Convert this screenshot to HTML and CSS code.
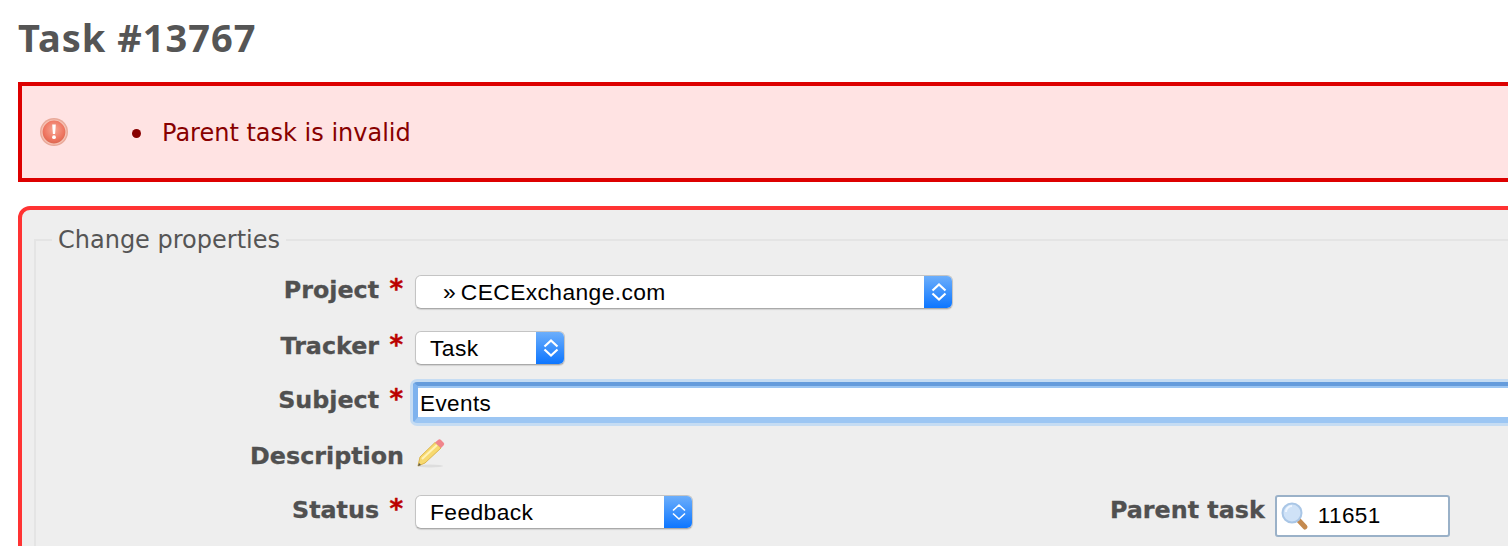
FILE: index.html
```html
<!DOCTYPE html>
<html lang="en">
<head>
<meta charset="utf-8">
<title>Task #13767</title>
<link rel="stylesheet" href="styles.css">
</head>
<body>
<div class="page">
  <h2 class="title">Task #13767</h2>
  <div class="flash">
    <svg class="flash-icon" width="30" height="30" viewBox="0 0 30 30" aria-hidden="true">
      <defs>
        <radialGradient id="er" cx="50%" cy="40%" r="60%">
          <stop offset="0" stop-color="#f7a795"/>
          <stop offset="0.7" stop-color="#ee7560"/>
          <stop offset="1" stop-color="#d9664f"/>
        </radialGradient>
      </defs>
      <circle cx="15" cy="15" r="14" fill="#e9a999"/>
      <circle cx="15" cy="15" r="12" fill="url(#er)" stroke="#f6c3b6" stroke-width="1.2"/>
      <path d="M13.2 7.5h3.6l-.7 9.5h-2.2z" fill="#fff"/>
      <circle cx="15" cy="20.2" r="1.9" fill="#fff"/>
    </svg>
    <ul class="flash-list"><li class="flash-item">Parent task is invalid</li></ul>
  </div>
  <form class="box">
    <fieldset class="props">
      <legend class="props-legend">Change properties</legend>
      <div class="row row-project">
        <label class="lbl">Project <span class="req">*</span></label>
        <div class="sel sel-project"><span class="sel-text sel-text-indent">» CECExchange.com</span><span class="sel-btn"><svg width="16" height="22" viewBox="0 0 16 22"><path d="M1.500 9.500 8 3.500l6.500 6M1.500 12.500 8 18.500l6.500-6" fill="none" stroke="#fff" stroke-width="2.200"/></svg></span></div>
      </div>
      <div class="row row-tracker">
        <label class="lbl">Tracker <span class="req">*</span></label>
        <div class="sel sel-tracker"><span class="sel-text">Task</span><span class="sel-btn"><svg width="16" height="22" viewBox="0 0 16 22"><path d="M1.500 9.500 8 3.500l6.500 6M1.500 12.500 8 18.500l6.500-6" fill="none" stroke="#fff" stroke-width="2.200"/></svg></span></div>
      </div>
      <div class="row row-subject">
        <label class="lbl lbl-subject">Subject <span class="req">*</span></label>
        <div class="subject">Events</div>
      </div>
      <div class="row row-desc">
        <label class="lbl lbl-desc">Description</label>
        <svg class="pencil" width="32" height="32" viewBox="0 0 32 32" aria-hidden="true">
          <ellipse cx="16" cy="28" rx="13" ry="1.500" fill="#ddd"/>
          <path d="M6 19 21 4.500 27 10 11 25 4 28z" fill="#f7d96f" stroke="#dcb64f" stroke-width="1"/>
          <path d="M8 21 23 7" stroke="#fff2b8" stroke-width="2"/>
          <path d="M21 4.500 24 2a2 2 0 0 1 3 0l2.500 2.500a2 2 0 0 1 0 3L27 10z" fill="#f0858c"/>
          <path d="M5 25 4 28l3-1z" fill="#555"/>
        </svg>
      </div>
      <div class="row row-status">
        <label class="lbl">Status <span class="req">*</span></label>
        <div class="sel sel-status"><span class="sel-text">Feedback</span><span class="sel-btn"><svg width="16" height="22" viewBox="0 0 16 22"><path d="M2 9.500 8 4l6 5.500M2 12.500 8 18l6-5.500" fill="none" stroke="#fff" stroke-width="1.600"/></svg></span></div>
        <div class="parent">
          <label class="lbl-parent">Parent task</label>
          <div class="parent-input">
            <svg width="30" height="30" viewBox="0 0 30 30" aria-hidden="true">
              <path d="M17.500 18 25 26" stroke="#c58a4f" stroke-width="5" stroke-linecap="round"/>
              <circle cx="12" cy="12" r="9.500" fill="#cfe2f7" stroke="#a9c6e6" stroke-width="2"/>
              <path d="M6 11a6 6 0 0 1 6-6" stroke="#eef6ff" stroke-width="2" fill="none"/>
            </svg>
            <span class="parent-val">11651</span>
          </div>
        </div>
      </div>
    </fieldset>
  </form>
</div>
</body>
</html>
```
FILE: styles.css
```css
html, body {
  margin: 0;
  padding: 0;
  background: #fff;
  overflow: hidden;
  height: 546px;
}
.page {
  width: 1700px;
  padding-left: 18px;
  box-sizing: border-box;
}
.title {
  margin: 0;
  padding-top: 15px;
  height: 82px;
  box-sizing: border-box;
  font-family: "Noto Sans", "DejaVu Sans", sans-serif;
  font-size: 38px;
  letter-spacing: 1px;
  line-height: 44px;
  font-weight: 700;
  color: #555;
}
.flash {
  height: 100px;
  box-sizing: border-box;
  border: 4px solid #dd0000;
  background: #ffe3e3;
  display: flex;
  align-items: center;
  padding-left: 17px;
}
.flash-icon {
  flex: none;
}
.flash-list {
  margin: 2px 0 0 63px;
  padding: 0;
  list-style: none;
  font-family: "DejaVu Sans", sans-serif;
  font-size: 24px;
  color: #880000;
}
.flash-item {
  display: flex;
  align-items: center;
}
.flash-item::before {
  content: "";
  width: 9px;
  height: 9px;
  margin-right: 21px;
  border-radius: 50%;
  background: #880000;
}
.box {
  display: block;
  margin-top: 24px;
  border: 4px solid #ff3333;
  border-radius: 12px;
  background: #eee;
  height: 400px;
  padding: 15px 0 0 12px;
}
.props {
  margin: 0;
  padding: 0;
  border: 2px solid #e4e4e4;
  min-width: 0;
  height: 380px;
  box-sizing: border-box;
}
.props-legend {
  margin-left: 16px;
  padding: 0 6px 0 6px;
  font-family: "DejaVu Sans", sans-serif;
  font-size: 24px;
  line-height: 30px;
  color: #555;
}
.row {
  display: flex;
  align-items: center;
}
.lbl {
  width: 367px;
  margin-right: 12px;
  padding-bottom: 4px;
  flex: none;
  text-align: right;
  font-family: "DejaVu Sans", sans-serif;
  font-weight: 700;
  font-size: 23.800px;
  color: #505050;
  box-sizing: border-box;
  -webkit-text-stroke: 0.3px #505050;
}
.lbl-subject { padding-bottom: 6px; }
.lbl-desc {
  width: 368px;
  margin-right: 11px;
  padding-bottom: 0;
}
.req {
  color: #bb0000;
  font-size: 26px;
  line-height: 20px;
  -webkit-text-stroke: 0.4px #bb0000;
  margin-left: 2px;
}
.row-project { margin-top: 20px; height: 34px; }
.row-tracker { margin-top: 22px; height: 34px; }
.row-subject { margin-top: 15px; height: 46px; }
.row-desc { margin-top: 12px; height: 36px; }
.row-status { margin-top: 21px; height: 34px; }
.sel {
  flex: none;
  height: 34px;
  box-sizing: border-box;
  display: flex;
  background: #fff;
  border: 1px solid #c4c4c4;
  border-bottom-color: #aaa;
  border-radius: 6px;
  box-shadow: 0 1px 1px rgba(0,0,0,.12);
  overflow: hidden;
  font-family: "Liberation Sans", sans-serif;
  font-size: 22.800px;
  letter-spacing: 0.4px;
  color: #000;
}
.sel-project { width: 538px; }
.sel-tracker { width: 150px; }
.sel-status { width: 278px; }
.sel-text {
  flex: 1;
  padding-left: 14px;
  line-height: 33px;
  white-space: nowrap;
}
.sel-text-indent {
  padding-left: 27px;
  word-spacing: -2px;
}
.sel-btn {
  flex: none;
  width: 29px;
  margin: -1px -1px -1px 0;
  background: linear-gradient(#6fb0fb, #0a74ff);
  display: flex;
  align-items: center;
  justify-content: center;
}
.subject {
  flex: none;
  width: 1240px;
  height: 41px;
  margin-left: -2px;
  margin-top: -1px;
  box-sizing: border-box;
  border-style: solid;
  border-width: 4px 5px 6px 5px;
  border-color: #659cdc #7db2ee #9cc6f3 #7db2ee;
  box-shadow: 0 0 0 3px #c5dcf3, inset 0 2px 0 #9cc6f3;
  border-radius: 4px;
  background: #fff;
  padding: 2px 0 0 2px;
  font-family: "Liberation Sans", sans-serif;
  font-size: 22.500px;
  letter-spacing: 0.4px;
  line-height: 31px;
  color: #000;
}
.pencil { margin-left: -1px; margin-top: -4px; }
.parent {
  display: flex;
  align-items: center;
  margin-left: 417px;
}
.lbl-parent {
  font-family: "DejaVu Sans", sans-serif;
  font-weight: 700;
  font-size: 23.800px;
  color: #505050;
  -webkit-text-stroke: 0.3px #505050;
  margin-right: 10px;
  margin-top: -5px;
}
.parent-input {
  width: 175px;
  height: 42px;
  margin-top: 7px;
  box-sizing: border-box;
  border: 2px solid #9ab1c8;
  border-radius: 3px;
  background: #fff;
  display: flex;
  align-items: center;
  padding-left: 3px;
}
.parent-val {
  margin-left: 8px;
  font-family: "Liberation Sans", sans-serif;
  font-size: 22.500px;
  letter-spacing: 0.4px;
  color: #000;
}
```
